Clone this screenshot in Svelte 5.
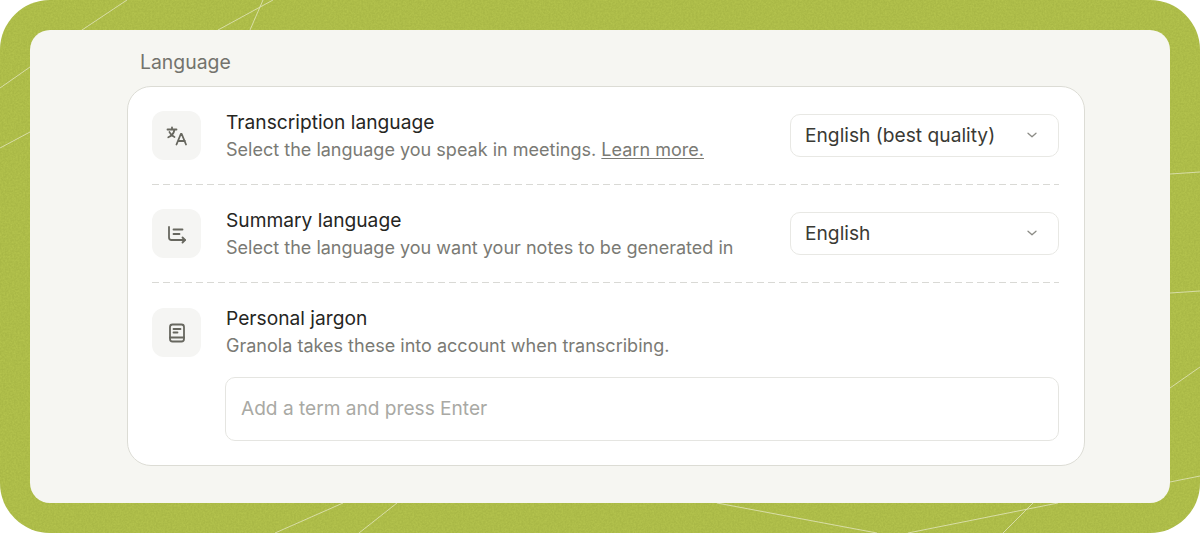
<script>
  const lines = [
    [82,30,127,0],[0,88,30,67],[0,148,30,132],[218,30,273,0],[250,30,263,0],
    [275,533,343,503],[359,533,397,503],[717,503,877,533],[908,533,1058,503],[1003,533,1033,503],
    [1170,174,1200,172],[1170,293,1200,291],[1170,388,1200,367],[1170,482,1200,476]
  ];
</script>

<div class="frame">
  <svg class="texture" width="1200" height="533" aria-hidden="true">
    <defs>
      <filter id="grain" x="0" y="0" width="100%" height="100%" color-interpolation-filters="sRGB">
        <feTurbulence type="fractalNoise" baseFrequency="0.55" numOctaves="2" seed="4" />
        <feColorMatrix type="matrix" values="0 0 0 0 0.78  0 0 0 0 0.84  0 0 0 0 0.35  0.7 0 0 0 -0.2" />
      </filter>
    </defs>
    <rect width="1200" height="533" filter="url(#grain)" />
    {#each lines as l}
      <line x1={l[0]} y1={l[1]} x2={l[2]} y2={l[3]} />
    {/each}
  </svg>

  <main class="panel">
    <h2>Language</h2>
    <section class="card">
      <div class="row">
        <div class="icon">
          <svg viewBox="0 0 24 24" width="24" height="24"><path d="M2.500 5.500h9M7 3.500v2M9.500 5.500c-.6 3.600-2.800 6.300-6.200 7.800M4.400 8c.9 2.300 2.700 4 5.100 5" /><path d="M11.500 20.500l4.300-10.500h.9l4.300 10.500M13 17h7" /></svg>
        </div>
        <div class="copy">
          <div class="title">Transcription language</div>
          <div class="desc">Select the language you speak in meetings. <a href="#learn">Learn more.</a></div>
        </div>
        <button class="select" type="button">
          <span>English (best quality)</span>
          <svg viewBox="0 0 12 12" width="12" height="12"><path d="M2 4.200l4 3.600 4-3.600" /></svg>
        </button>
      </div>
      <div class="row">
        <div class="icon">
          <svg viewBox="0 0 24 24" width="24" height="24"><path d="M4 5v10.500a2.500 2.500 0 0 0 2.500 2.500H20" /><path d="M17.500 15.500L20 18l-2.500 2.500" /><path d="M8.500 7.500h9M8.500 12h6" /></svg>
        </div>
        <div class="copy">
          <div class="title">Summary language</div>
          <div class="desc">Select the language you want your notes to be generated in</div>
        </div>
        <button class="select" type="button">
          <span>English</span>
          <svg viewBox="0 0 12 12" width="12" height="12"><path d="M2 4.200l4 3.600 4-3.600" /></svg>
        </button>
      </div>
      <div class="row last">
        <div class="icon">
          <svg viewBox="0 0 24 24" width="24" height="24"><rect x="5" y="3.500" width="14" height="17" rx="2.500" /><path d="M5 16.500h14M8.500 8h7M8.500 11.500h4" /></svg>
        </div>
        <div class="copy wide">
          <div class="title">Personal jargon</div>
          <div class="desc">Granola takes these into account when transcribing.</div>
          <input class="term" type="text" placeholder="Add a term and press Enter" />
        </div>
      </div>
    </section>
  </main>
</div>

<style>
  :global(body) {
    margin: 0;
    background: #fff;
  }
  .frame {
    position: relative;
    box-sizing: border-box;
    width: 1200px;
    height: 533px;
    padding: 30px;
    border-radius: 50px;
    overflow: hidden;
    background: #a9b846;
    font-family: Inter, "Noto Sans", sans-serif;
  }
  .texture {
    position: absolute;
    inset: 0;
  }
  .texture line {
    stroke: #e2e5bd;
    stroke-width: 1;
    stroke-opacity: 0.8;
  }
  .panel {
    position: relative;
    box-sizing: border-box;
    height: 473px;
    padding: 20px 85px 0 97px;
    border-radius: 20px;
    background: #f6f6f2;
  }
  h2 {
    margin: 0 0 12px 13px;
    font-size: 19.400px;
    line-height: 24px;
    font-weight: 400;
    color: #73736d;
  }
  .card {
    box-sizing: border-box;
    height: 380px;
    padding: 0 25px 0 24px;
    border: 1px solid #dcdcd5;
    border-radius: 24px;
    background: #fff;
  }
  .row {
    display: flex;
    align-items: center;
    height: 98px;
    box-sizing: border-box;
    padding-bottom: 1px;
    background: repeating-linear-gradient(90deg, #d9d9d5 0 7px, transparent 7px 11px) bottom / 100% 1px no-repeat;
  }
  .row.last {
    align-items: flex-start;
    height: auto;
    padding: 25px 0 0;
    background: none;
  }
  .icon {
    flex: none;
    display: flex;
    align-items: center;
    justify-content: center;
    width: 49px;
    height: 49px;
    margin-right: 24px;
    border-radius: 12px;
    background: #f5f5f3;
  }
  .icon svg {
    fill: none;
    stroke: #67675f;
    stroke-width: 1.800;
    stroke-linecap: round;
    stroke-linejoin: round;
  }
  .copy {
    flex: 1;
    min-width: 0;
    padding-top: 1px;
  }
  .copy.wide {
    margin-top: -4px;
  }
  .title {
    padding-left: 1px;
    font-size: 19.200px;
    line-height: 27px;
    color: #26261f;
  }
  .desc {
    padding-left: 1px;
    font-size: 18.050px;
    line-height: 28px;
    color: #7a7a74;
  }
  .desc a {
    color: #7a7a74;
    text-decoration: underline;
    text-underline-offset: 2px;
  }
  .select {
    flex: none;
    display: flex;
    align-items: center;
    justify-content: space-between;
    box-sizing: border-box;
    width: 269px;
    height: 43px;
    padding: 0 20px 1px 14px;
    border: 1px solid #e8e8e4;
    border-radius: 10px;
    background: #fff;
    font: inherit;
    font-size: 19.200px;
    color: #3a3a34;
  }
  .select svg {
    fill: none;
    stroke: #8d8d87;
    stroke-width: 1.300;
    stroke-linecap: round;
    stroke-linejoin: round;
  }
  .term {
    display: block;
    box-sizing: border-box;
    width: 100%;
    height: 64px;
    margin-top: 17px;
    padding: 0 15px 2px;
    border: 1px solid #e5e5e1;
    border-radius: 10px;
    background: #fff;
    font: inherit;
    font-size: 19.100px;
    outline: none;
  }
  .term::placeholder {
    color: #a9a9a4;
    opacity: 1;
  }
</style>
